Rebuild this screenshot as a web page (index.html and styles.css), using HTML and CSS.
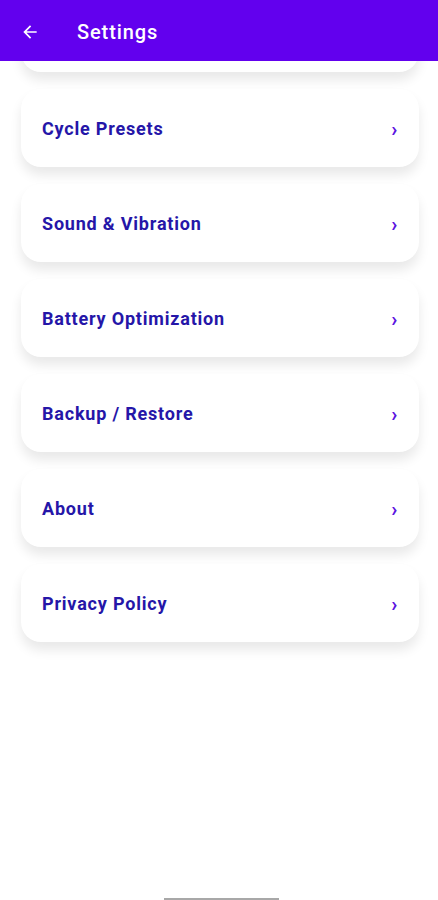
FILE: index.html
```html
<!DOCTYPE html>
<html lang="en">
<head>
    <meta charset="UTF-8">
    <meta name="viewport" content="width=device-width, initial-scale=1.0">
    <title>Settings</title>
    <link rel="stylesheet" href="styles.css">
</head>
<body>
    <header class="app-bar">
        <svg class="back" width="20" height="20" viewBox="0 0 24 24">
            <path d="M20 11H7.83l5.59-5.59L12 4l-8 8 8 8 1.41-1.41L7.83 13H20v-2z" fill="#fff"/>
        </svg>
        <h1>Settings</h1>
    </header>

    <main class="content">
        <ul class="settings-list">
            <!-- scrolled up under the app bar -->
            <li class="item"></li>
            <li class="item"><span>Cycle Presets</span><span class="chev">&#x203A;</span></li>
            <li class="item"><span>Sound &amp; Vibration</span><span class="chev">&#x203A;</span></li>
            <li class="item"><span>Battery Optimization</span><span class="chev">&#x203A;</span></li>
            <li class="item"><span>Backup / Restore</span><span class="chev">&#x203A;</span></li>
            <li class="item"><span>About</span><span class="chev">&#x203A;</span></li>
            <li class="item"><span>Privacy Policy</span><span class="chev">&#x203A;</span></li>
        </ul>
    </main>

    <div class="home-bar"></div>
</body>
</html>
```

FILE: styles.css
```css
body {
    margin: 0;
    padding: 0;
    height: 900px;
    background-color: #ffffff;
    font-family: Roboto, "Noto Sans", sans-serif;
    overflow: hidden;
}

.app-bar {
    position: relative;
    z-index: 2;
    height: 61px;
    background-color: #6200ee;
    display: flex;
    align-items: center;
    padding: 0 0 0 20px;
    box-sizing: border-box;
}

.app-bar .back {
    margin-top: 2px;
}

.app-bar h1 {
    margin: 3px 0 0 37px;
    color: #ffffff;
    font-size: 20px;
    font-weight: 500;
    letter-spacing: 0.9px;
}

.content {
    overflow: hidden;
}

.settings-list {
    list-style: none;
    margin: -67px 0 0 0;
    padding: 0 19px 40px 21px;
    display: flex;
    flex-direction: column;
    gap: 17px;
}

.item {
    height: 78px;
    background-color: #ffffff;
    border-radius: 20px;
    box-shadow: 0 8px 12px rgba(0, 0, 0, 0.09);
    display: flex;
    align-items: center;
    justify-content: space-between;
    padding: 0 21px 0 21px;
    color: #2516a8;
    font-size: 18px;
    font-weight: 700;
    letter-spacing: 0.8px;
}

.chev {
    color: #5a14e0;
    font-size: 20px;
    font-weight: 700;
    margin-top: 2px;
}

.home-bar {
    position: fixed;
    left: 164px;
    bottom: 0;
    width: 115px;
    height: 2px;
    background-color: #a8a8a8;
}
```
